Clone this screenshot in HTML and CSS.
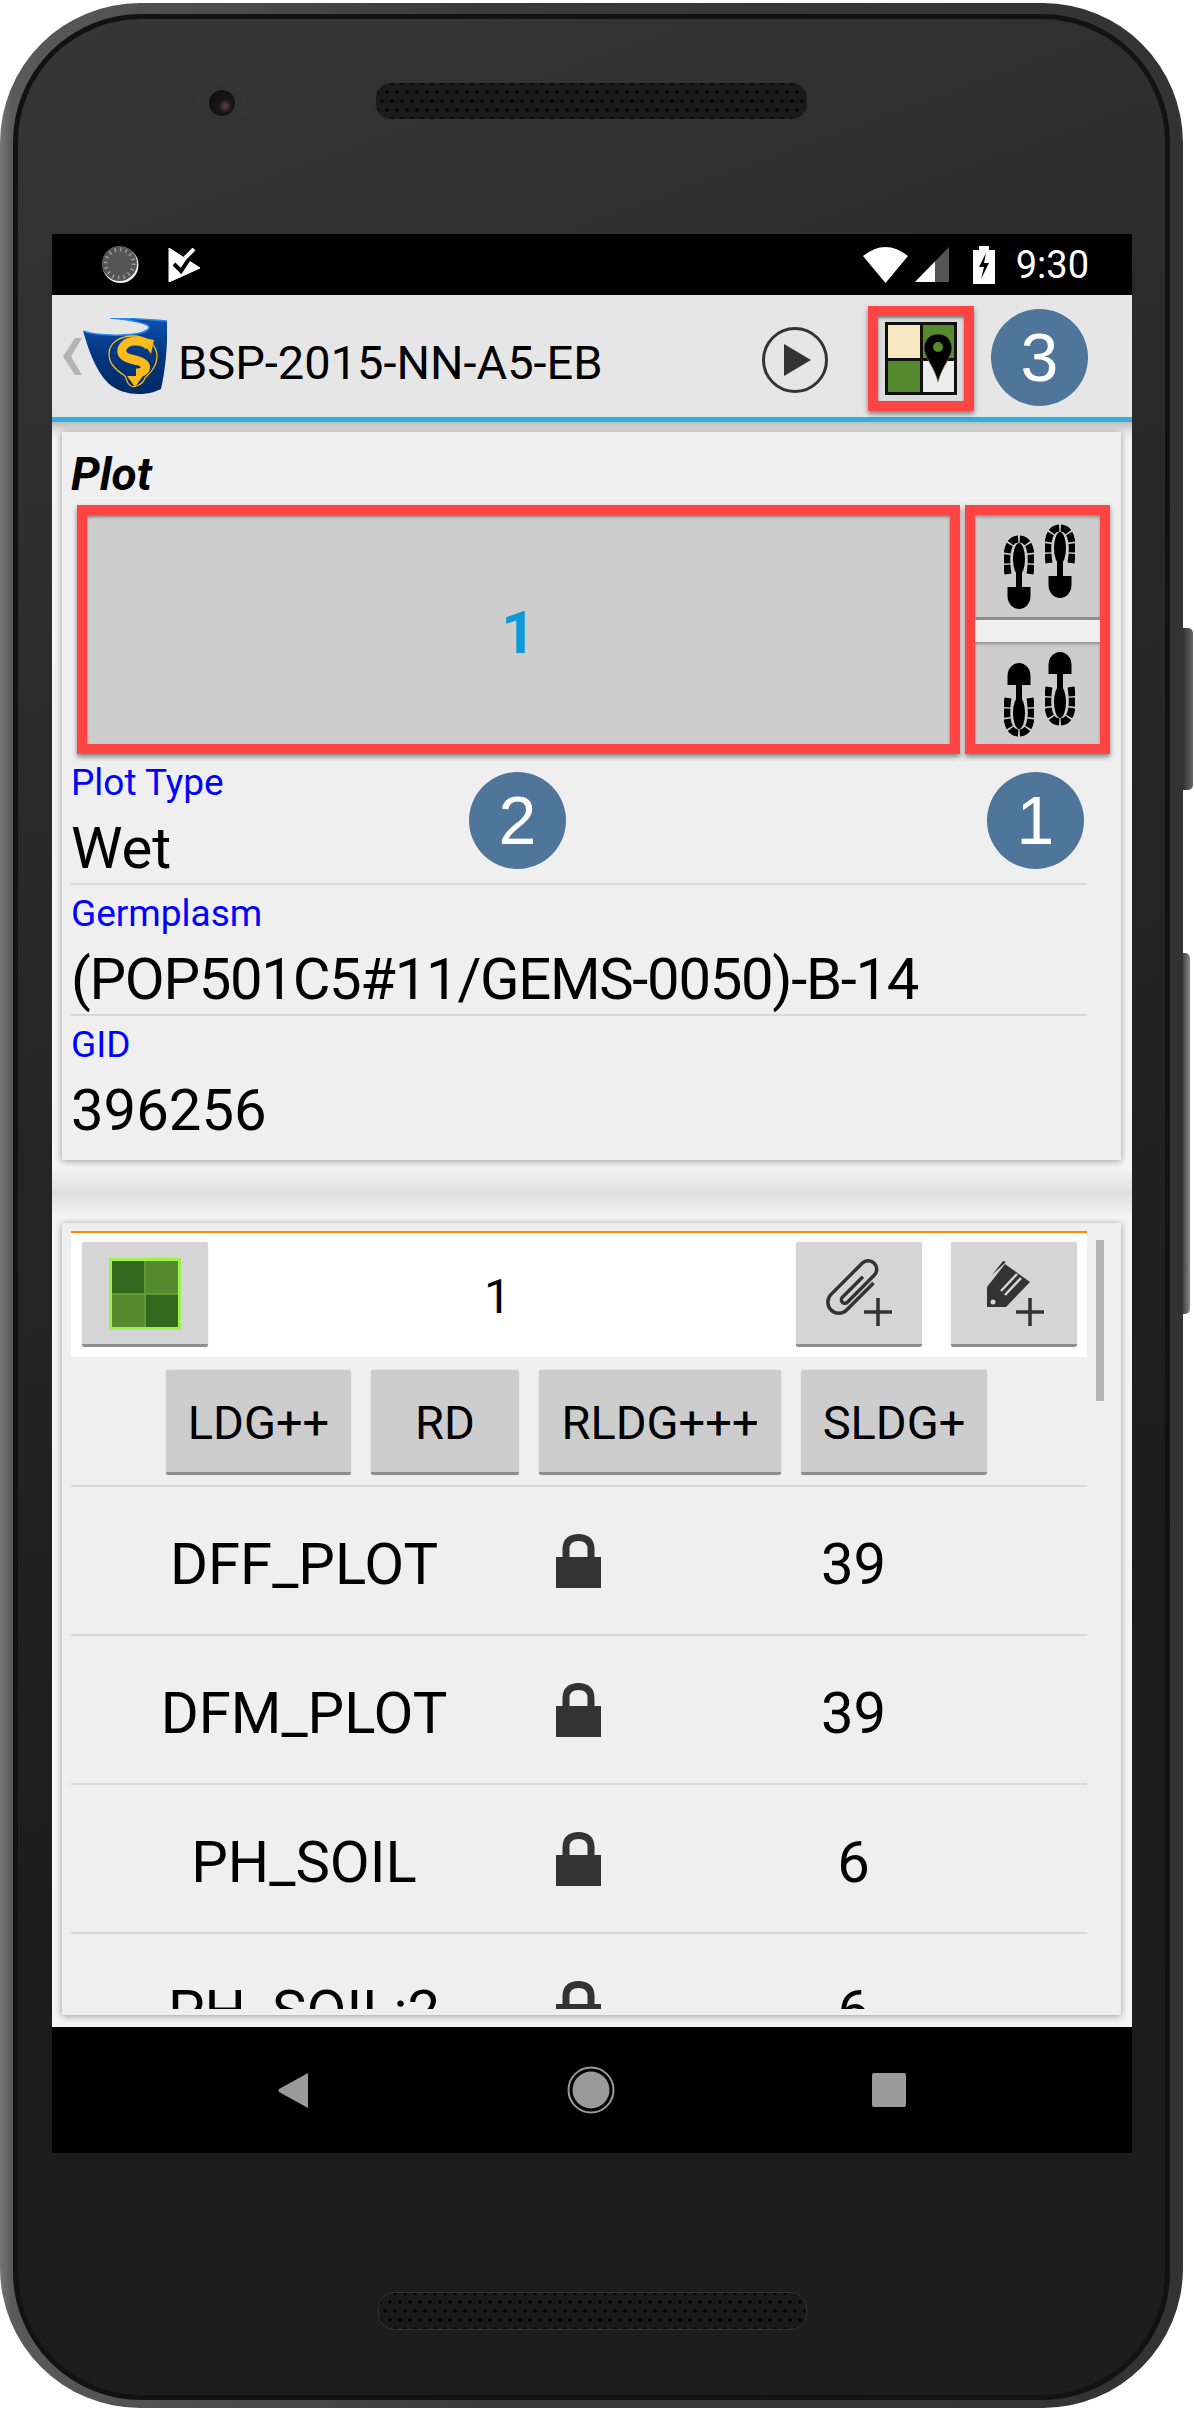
FILE: index.html
```html
<!DOCTYPE html>
<html lang="en">
<head>
  <meta charset="UTF-8">
  <title>BSP-2015-NN-A5-EB</title>
  <link rel="stylesheet" href="styles.css">
</head>
<body>

<svg class="defs" width="0" height="0">
  <symbol id="shoe" viewBox="0 0 30 74">
    <path d="M4 39C1 20 3 4 15 4C27 4 29 20 26 39" fill="none" stroke="#000" stroke-width="7" stroke-dasharray="9 1.500"/>
    <ellipse cx="15" cy="24" rx="6" ry="16"/>
    <rect x="12" y="36" width="6" height="18"/>
    <path d="M3.500 52H26.500V61A11.500 13 0 0 1 3.500 61Z"/>
  </symbol>
  <symbol id="lock" viewBox="0 0 45 54">
    <path d="M10 24V15C10 7 15 3.500 22.500 3.500C30 3.500 35 7 35 15V24" fill="none" stroke="#333" stroke-width="7"/>
    <rect x="0" y="23" width="45" height="31" fill="#333"/>
  </symbol>
</svg>

<div class="phone">
  <div class="side-key power"></div>
  <div class="side-key volume"></div>

  <div class="bezel-top">
    <div class="camera"><div class="lens"></div></div>
    <div class="speaker"></div>
  </div>

  <div class="screen">
    <!-- barra de estado -->
    <div class="status-bar">
      <svg class="st-disc" width="37" height="37" viewBox="0 0 37 37">
        <circle cx="18.500" cy="19" r="18" fill="#eee"/>
        <circle cx="17.500" cy="17.500" r="17.500" fill="#555"/>
        <circle cx="17.500" cy="17.500" r="14" fill="none" stroke="#999" stroke-width="4" stroke-dasharray="1.500 4"/>
      </svg>
      <svg class="st-check" width="32" height="34" viewBox="0 0 32 34">
        <path d="M1 0L32 20L1 34Z" fill="#fff" stroke="#fff" stroke-linejoin="round"/>
        <path d="M6 16L13 23L25 5" fill="none" stroke="#000" stroke-width="4"/>
        <path d="M17 10L26 1" fill="none" stroke="#fff" stroke-width="4"/>
      </svg>
      <div class="st-right">
        <svg width="45" height="36" viewBox="0 0 45 36"><path d="M0 9Q22.500-9 45 9L22.500 36Z" fill="#fff"/></svg>
        <svg width="34" height="35" viewBox="0 0 34 35"><path d="M0 35L34 0V35Z" fill="#555"/><path d="M0 35L20 14.500V35Z" fill="#fff"/></svg>
        <svg class="st-batt" width="22" height="38" viewBox="0 0 22 38"><path d="M0 4H6V0H16V4H22V38H0Z" fill="#fff"/><path d="M13 7L6 21H11L8 33L16 17H11Z" fill="#000"/></svg>
        <span class="st-time">9:30</span>
      </div>
    </div>

    <!-- barra de la app -->
    <div class="app-bar">
      <svg class="chevron" width="19" height="37" viewBox="0 0 19 37"><path d="M19 0H12L0 18.500L12 37H19L8 18.500Z" fill="#b4b4b4"/></svg>
      <svg class="logo" width="84" height="77" viewBox="0 0 84 77">
        <defs>
          <linearGradient id="cup" x1="0" y1="0" x2="0" y2="1">
            <stop offset="0" stop-color="#0f50ad"/>
            <stop offset="0.5" stop-color="#04367e"/>
            <stop offset="1" stop-color="#002a66"/>
          </linearGradient>
        </defs>
        <path d="M0 13C12 18 60 20 66 10C68 6 50 2 27 0C50 0 70 2 84 3C85 20 83 50 78 71C65 78 40 79 25 65C12 52 5 30 0 13Z" fill="url(#cup)"/>
        <path d="M0 13C12 18 60 20 66 10C68 6 50 2 27 0C50 0 70 2 84 3" fill="none" stroke="#2b86ee" stroke-width="1.500"/>
        <path d="M42 58C30 50 26 44 26 36C26 24 38 18 50 18C62 18 74 26 74 38C74 48 68 54 62 60C60 66 52 70 48 68C44 66 44 62 42 58Z" fill="none" stroke="#f5b921" stroke-width="1.300"/>
        <path d="M66 28C58 20 42 22 39 31C37 40 48 41 56 43C66 46 64 55 53 55" fill="none" stroke="#f9bc1c" stroke-width="9"/>
        <path d="M56 19L71 22L68 36Z" fill="#f9bc1c"/>
        <path d="M44 58H60L52 69Z" fill="#f9bc1c"/>
      </svg>
      <span class="app-title">BSP-2015-NN-A5-EB</span>
      <svg class="play" width="66" height="66" viewBox="0 0 66 66">
        <circle cx="33" cy="33" r="31.500" fill="none" stroke="#333" stroke-width="3"/>
        <path d="M22 17L49 33L22 49Z" fill="#333"/>
      </svg>
      <div class="red-frame map-frame">
        <div class="map-btn">
          <svg width="72" height="73" viewBox="0 0 72 73">
            <rect width="72" height="73" fill="#111"/>
            <rect x="3" y="3" width="32" height="33" fill="#f7e9c4"/>
            <rect x="38" y="3" width="31" height="33" fill="#568a2e"/>
            <rect x="3" y="39" width="32" height="31" fill="#568a2e"/>
            <rect x="38" y="39" width="31" height="31" fill="#ececec"/>
            <path d="M53 12C43 12 39 20 39 26C39 35 49 44 53 60C57 44 67 35 67 26C67 20 63 12 53 12Z" fill="#000" stroke="#8f8a3c" stroke-width="0.600"/>
            <circle cx="53" cy="25" r="5" fill="#568a2e"/>
          </svg>
        </div>
      </div>
      <div class="badge badge-3">3</div>
    </div>
    <div class="bar-line"></div>

    <div class="content">
      <!-- tarjeta de la parcela -->
      <div class="card plot-card">
        <div class="plot-title">Plot</div>
        <div class="plot-actions">
          <div class="red-frame">
            <div class="plot-number">1</div>
          </div>
          <div class="red-frame">
            <div class="steps">
              <div class="step-btn step-up">
                <svg class="shoe-l" width="30" height="74"><use href="#shoe"/></svg>
                <svg class="shoe-r" width="30" height="74"><use href="#shoe"/></svg>
              </div>
              <div class="step-btn step-down">
                <svg class="shoe-l flip" width="30" height="74"><use href="#shoe"/></svg>
                <svg class="shoe-r flip" width="30" height="74"><use href="#shoe"/></svg>
              </div>
            </div>
          </div>
        </div>
        <div class="fields">
          <div class="field">
            <div class="field-label">Plot Type</div>
            <div class="field-value">Wet</div>
          </div>
          <div class="field">
            <div class="field-label">Germplasm</div>
            <div class="field-value tight">(POP501C5#11/GEMS-0050)-B-14</div>
          </div>
          <div class="field last">
            <div class="field-label">GID</div>
            <div class="field-value">396256</div>
          </div>
          <div class="badge badge-2">2</div>
          <div class="badge badge-1">1</div>
        </div>
      </div>

      <div class="separator"></div>

      <!-- tarjeta de rasgos -->
      <div class="card traits-card">
        <div class="scrollbar"></div>
        <div class="traits-head">
          <button class="tool-btn">
            <svg class="grid-icon" width="72" height="72" viewBox="0 0 72 72">
              <rect width="72" height="72" fill="#9cf24b"/>
              <rect x="3" y="3" width="66" height="66" fill="#5c9a34"/>
              <rect x="3" y="3" width="32" height="32" fill="#33691e"/>
              <rect x="37" y="3" width="32" height="32" fill="#558b2f"/>
              <rect x="3" y="37" width="32" height="32" fill="#558b2f"/>
              <rect x="37" y="37" width="32" height="32" fill="#33691e"/>
            </svg>
          </button>
          <span class="head-number">1</span>
          <button class="tool-btn">
            <svg width="126" height="105" viewBox="0 0 126 105">
              <g transform="translate(57 47) rotate(45)" fill="none" stroke="#333" stroke-width="3.500">
                <path d="M11-18V20A11 11 0 0 1-11 20V-24A8.500 8.500 0 0 1 6-24V14A3.500 3.500 0 0 1-1 14V-15"/>
              </g>
              <path d="M68 71H96M82 57V85" stroke="#333" stroke-width="3.500" fill="none"/>
            </svg>
          </button>
          <button class="tool-btn">
            <svg width="126" height="105" viewBox="0 0 126 105">
              <path d="M36 66V46L54 23L79 41L55 66Z" fill="#333"/>
              <path d="M41 34L52 20L55 21Z" fill="#333"/>
              <path d="M50 50L66 33M54 54L70 37" stroke="#d6d6d6" stroke-width="2.500"/>
              <circle cx="42" cy="61" r="2.500" fill="#d6d6d6"/>
              <path d="M65 71H93M79 57V85" stroke="#333" stroke-width="3.500" fill="none"/>
            </svg>
          </button>
        </div>
        <div class="tag-row">
          <button class="tag-btn w-ldg">LDG++</button>
          <button class="tag-btn w-rd">RD</button>
          <button class="tag-btn w-rldg">RLDG+++</button>
          <button class="tag-btn w-sldg">SLDG+</button>
        </div>
        <div class="trait-list">
          <div class="trait">
            <span>DFF_PLOT</span>
            <svg width="45" height="54"><use href="#lock"/></svg>
            <span>39</span>
          </div>
          <div class="trait">
            <span>DFM_PLOT</span>
            <svg width="45" height="54"><use href="#lock"/></svg>
            <span>39</span>
          </div>
          <div class="trait">
            <span>PH_SOIL</span>
            <svg width="45" height="54"><use href="#lock"/></svg>
            <span>6</span>
          </div>
          <div class="trait">
            <span>PH_SOIL:2</span>
            <svg width="45" height="54"><use href="#lock"/></svg>
            <span>6</span>
          </div>
        </div>
      </div>
    </div>

    <!-- navegacion android -->
    <div class="nav-bar">
      <svg width="30" height="35" viewBox="0 0 30 35"><path d="M30 0V35L1 19Q0 17.500 1 16Z" fill="#9a9a9a"/></svg>
      <svg width="48" height="48" viewBox="0 0 48 48"><circle cx="24" cy="24" r="22.500" fill="none" stroke="#9a9a9a" stroke-width="2"/><circle cx="24" cy="24" r="18.500" fill="#9a9a9a"/></svg>
      <svg width="34" height="34" viewBox="0 0 34 34"><rect width="34" height="34" rx="2" fill="#9a9a9a"/></svg>
    </div>
  </div>

  <div class="speaker speaker-bottom"></div>
</div>

</body>
</html>
```

FILE: styles.css
```css
* {
  box-sizing: border-box;
}
html, body {
  margin: 0;
  padding: 0;
  background-color: #fff;
}
body {
  width: 1194px;
  height: 2409px;
  overflow: hidden;
  font-family: Roboto, "Liberation Sans", sans-serif;
  color: #000;
}
button {
  font-family: inherit;
  border: none;
  padding: 0;
  margin: 0;
}
svg {
  display: block;
}
.defs {
  position: absolute;
}

/* telefono */
.phone {
  position: relative;
  width: 1183px;
  height: 2405px;
  margin-top: 3px;
  padding-left: 52px;
  border-radius: 140px;
  background: linear-gradient(90deg, #767676 0, #5a5a5a 12px, #3a3a3a 40%, #333 100%);
}
.phone::before {
  content: "";
  position: absolute;
  top: 11px;
  left: 13px;
  right: 13px;
  bottom: 8px;
  border: 5px solid #121212;
  border-radius: 128px;
  background: linear-gradient(160deg, #363636 0%, #272727 35%, #1c1c1c 70%, #1d1d1d 100%);
}
.side-key {
  position: absolute;
  left: 100%;
  border-radius: 0 5px 5px 0;
}
.power {
  top: 625px;
  width: 10px;
  height: 162px;
  background: linear-gradient(90deg, #333, #666);
}
.volume {
  top: 950px;
  width: 7px;
  height: 361px;
  background: linear-gradient(90deg, #444, #888);
}
.bezel-top {
  position: relative;
  height: 231px;
  padding-top: 79px;
  display: flex;
  align-items: flex-start;
}
.camera {
  width: 45px;
  height: 45px;
  margin: -2px 0 0 147px;
  border-radius: 50%;
  border: 1px solid #3a3a3a;
  display: flex;
  align-items: center;
  justify-content: center;
}
.lens {
  width: 26px;
  height: 26px;
  border-radius: 50%;
  background: radial-gradient(circle at 62% 62%, #6a4040 0, #1a1518 28%, #0c0c0e 100%);
}
.speaker {
  position: relative;
  width: 433px;
  height: 38px;
  margin-left: 131px;
  border-radius: 16px;
  border: 1px solid #333;
  background-color: #1a1a1a;
  background-image:
    radial-gradient(circle, #050505 1.5px, transparent 2px),
    radial-gradient(circle, #050505 1.5px, transparent 2px);
  background-size: 10px 18px;
  background-position: 6px 0, 11px 9px;
}
.speaker-bottom {
  margin: 139px 0 0 326px;
  width: 429px;
}

/* pantalla */
.screen {
  position: relative;
  width: 1080px;
  background-color: #f7f7f7;
}
.status-bar {
  height: 61px;
  background-color: #000;
  display: flex;
  align-items: center;
  padding-left: 50px;
}
.st-check {
  margin-left: 29px;
}
.st-right {
  margin-left: auto;
  display: flex;
  align-items: center;
  gap: 7px;
  padding-right: 43px;
}
.st-batt {
  margin: 0 14px 0 17px;
}
.st-time {
  color: #fff;
  font-size: 38px;
  line-height: 38px;
}

.app-bar {
  position: relative;
  height: 122px;
  background-color: #e6e6e6;
  display: flex;
  align-items: center;
  padding-left: 11px;
}
.logo {
  margin-left: 1px;
}
.app-title {
  font-size: 47px;
  margin: 12px 0 0 11px;
}
.play {
  position: absolute;
  left: 710px;
  top: 32px;
}
.red-frame {
  border: 10px solid #ff4444;
  box-shadow: 0 3px 5px rgba(0, 0, 0, 0.45);
}
.map-frame {
  position: absolute;
  left: 816px;
  top: 11px;
  width: 106px;
  height: 105px;
}
.map-btn {
  width: 86px;
  height: 85px;
  background-color: #dcdcdc;
  box-shadow: inset 0 2px 3px rgba(0, 0, 0, 0.45);
  display: flex;
  align-items: center;
  justify-content: center;
}
.bar-line {
  height: 5px;
  background-color: #2fb1e2;
}
.badge {
  position: absolute;
  width: 97px;
  height: 97px;
  border-radius: 50%;
  background-color: #4f759b;
  color: #fff;
  font-family: "Liberation Sans", sans-serif;
  font-size: 68px;
  line-height: 97px;
  text-align: center;
}
.badge-3 {
  left: 939px;
  top: 14px;
}
.badge-2 {
  left: 398px;
  top: 18px;
}
.badge-1 {
  left: 916px;
  top: 18px;
}

.content {
  height: 1605px;
  padding: 10px 10px 0 10px;
  background: linear-gradient(180deg, #bdbdbd 0, #e8e8e8 10px, #f5f5f5 20px, #f5f5f5 745px, #dfdfdf 771px, #f5f5f5 795px);
}
.card {
  position: relative;
  width: 1059px;
  background-color: #efefef;
  box-shadow: 0 1px 7px rgba(0, 0, 0, 0.38);
}
.plot-card {
  height: 728px;
  padding-left: 9px;
}
.plot-title {
  height: 73px;
  padding-top: 16px;
  font-size: 46px;
  line-height: 52px;
  font-weight: bold;
  font-style: italic;
}
.plot-actions {
  display: flex;
  gap: 5px;
  margin-left: 6px;
  height: 249px;
}
.plot-number {
  width: 863px;
  height: 229px;
  background-color: #cdcdcd;
  box-shadow: inset 0 2px 3px rgba(0, 0, 0, 0.4);
  color: #0e9ad6;
  font-size: 60px;
  font-weight: bold;
  line-height: 235px;
  text-align: center;
}
.steps {
  width: 125px;
  height: 229px;
  display: flex;
  flex-direction: column;
  gap: 22px;
}
.step-btn {
  position: relative;
  flex: 1;
  background-color: #cdcdcd;
  border-bottom: 3px solid #8e8e8e;
  box-shadow: inset 0 2px 3px rgba(0, 0, 0, 0.3);
}
.step-down {
  border-bottom: 0;
}
.step-btn svg {
  position: absolute;
}
.step-up .shoe-l {
  left: 29px;
  top: 20px;
}
.step-up .shoe-r {
  left: 70px;
  top: 9px;
}
.step-down .shoe-l {
  left: 29px;
  top: 21px;
}
.step-down .shoe-r {
  left: 70px;
  top: 10px;
}
.flip {
  transform: scaleY(-1);
}
.fields {
  position: relative;
  width: 1016px;
}
.field {
  height: 131px;
  padding-top: 9px;
  border-bottom: 2px solid #d8d8d8;
}
.field.last {
  border-bottom: 0;
}
.field-label {
  color: #0000ff;
  font-size: 37px;
  line-height: 40px;
}
.field-value {
  margin-top: 12px;
  font-size: 58px;
  line-height: 66px;
}
.tight {
  letter-spacing: -1.3px;
}

.separator {
  height: 63px;
}
.traits-card {
  height: 792px;
  padding: 8px 0 0 9px;
}
.scrollbar {
  position: absolute;
  left: 1034px;
  top: 17px;
  width: 8px;
  height: 161px;
  background-color: #b5b5b5;
}
.traits-head {
  width: 1016px;
  height: 126px;
  background-color: #fff;
  border-top: 2px solid #ff8c00;
  display: flex;
  padding: 9px 10px 0 11px;
}
.tool-btn, .tag-btn {
  height: 105px;
  background-color: #d5d5d5;
  border-radius: 3px;
  border-bottom: 3px solid #8e8e8e;
  box-shadow: 0 0 1px rgba(0, 0, 0, 0.3);
  display: flex;
  align-items: center;
  justify-content: center;
}
.tool-btn {
  width: 126px;
  flex: none;
}
.tool-btn + .tool-btn {
  margin-left: 29px;
}
.grid-icon {
  margin-top: 1px;
}
.head-number {
  flex: 1;
  padding-right: 9px;
  text-align: center;
  font-size: 48px;
  line-height: 110px;
}
.tag-row {
  display: flex;
  gap: 20px;
  padding: 13px 0 0 95px;
  height: 128px;
}
.tag-btn {
  background-color: #cdcdcd;
  font-size: 47px;
  padding-top: 2px;
  color: #000;
}
.w-ldg { width: 185px; }
.w-rd { width: 148px; }
.w-rldg { width: 242px; }
.w-sldg { width: 186px; }
.trait-list {
  width: 1016px;
  height: 524px;
  overflow: hidden;
}
.trait {
  height: 149px;
  display: grid;
  grid-template-columns: 466px 83px 467px;
  align-items: center;
  justify-items: center;
  border-top: 2px solid #d8d8d8;
  font-size: 58px;
}
.trait span {
  margin-top: 6px;
}

.nav-bar {
  height: 126px;
  background-color: #000;
  display: grid;
  grid-template-columns: repeat(3, 298px);
  padding-left: 92px;
  align-items: center;
  justify-items: center;
}
```
